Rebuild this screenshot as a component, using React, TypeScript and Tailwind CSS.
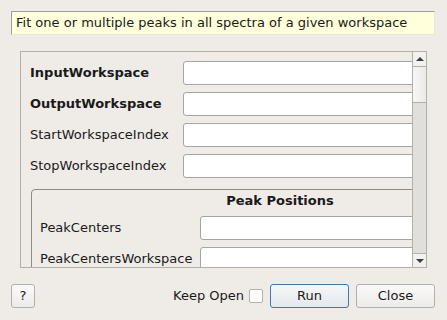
import React from "react";

const font = { fontFamily: '"DejaVu Sans", Verdana, sans-serif' };

function Field({ bold = false, label, inputLeft }: { bold?: boolean; label: string; inputLeft: string }) {
  return (
    <div className="flex items-center h-[24px]">
      <div className={`${inputLeft} shrink-0 text-[13px] text-[#1a1a1a] ${bold ? "font-bold" : ""}`}>{label}</div>
      <div className="flex-1 h-[24px] bg-white border border-[#a8a5a1] rounded-[3px]" />
    </div>
  );
}

export default function App() {
  return (
    <div className="w-[447px] h-[320px] bg-[#efebe7] overflow-hidden" style={font}>
      {/* description */}
      <div className="pt-[11px] pl-[11px]">
        <div className="w-[424px] h-[24px] bg-[#ffffdc] border-t border-l border-[#a09e9a] border-r border-b border-r-[#e8e6e0] border-b-[#e8e6e0] flex items-center pl-[4px] text-[13px] text-[#1a1a1a]">
          Fit one or multiple peaks in all spectra of a given workspace
        </div>
      </div>

      {/* scroll area */}
      <div className="ml-[20px] mt-[16px] w-[407px] h-[217px] border border-[#b3b0ab] flex">
        <div className="flex-1 overflow-hidden">
          <div className="w-[520px] pt-[9px] pl-[9px]">
            <div className="flex flex-col gap-[7px]">
              <Field bold label="InputWorkspace" inputLeft="w-[153px]" />
              <Field bold label="OutputWorkspace" inputLeft="w-[153px]" />
              <Field label="StartWorkspaceIndex" inputLeft="w-[153px]" />
              <Field label="StopWorkspaceIndex" inputLeft="w-[153px]" />
            </div>
            <div className="mt-[11px] ml-[1px] w-[490px] border border-[#8e8b87] rounded-[4px] pl-[8px] pb-[8px]">
              <div className="h-[26px] pt-[3px] leading-[16px] text-center text-[13px] font-bold text-[#1a1a1a]">Peak Positions</div>
              <div className="flex flex-col gap-[7px]">
                <Field label="PeakCenters" inputLeft="w-[160px]" />
                <Field label="PeakCentersWorkspace" inputLeft="w-[160px]" />
              </div>
            </div>
          </div>
        </div>
        {/* scrollbar */}
        <div className="w-[14px] shrink-0 border-l border-[#b3b0ab] flex flex-col bg-[#e1dfdb]">
          <div className="h-[15px] flex items-center justify-center bg-[#f3f1ee] border-b border-[#b3b0ab]">
            <div className="w-0 h-0 border-l-[4px] border-r-[4px] border-b-[4px] border-l-transparent border-r-transparent border-b-[#3c3c3c]" />
          </div>
          <div className="h-[36px] bg-gradient-to-r from-[#f7f6f4] to-[#ecebe8] border-b border-[#b3b0ab]" />
          <div className="flex-1" />
          <div className="h-[14px] flex items-center justify-center bg-[#f3f1ee] border-t border-[#b3b0ab]">
            <div className="w-0 h-0 border-l-[4px] border-r-[4px] border-t-[4px] border-l-transparent border-r-transparent border-t-[#3c3c3c]" />
          </div>
        </div>
      </div>

      {/* buttons */}
      <div className="mt-[16px] flex items-center h-[24px] pl-[11px] pr-[12px]">
        <div className="w-[24px] h-[24px] rounded-[3px] border border-[#b3b0ab] bg-gradient-to-b from-[#fbfaf9] to-[#ecebe8] flex items-center justify-center text-[13px] text-[#1a1a1a]">?</div>
        <div className="flex-1" />
        <div className="text-[13px] text-[#1a1a1a]">Keep Open</div>
        <div className="ml-[5px] w-[14px] h-[14px] bg-white border border-[#b3b0ab] rounded-[2px]" />
        <div className="ml-[7px] w-[79px] h-[24px] rounded-[3px] border border-[#3d7ab0] bg-gradient-to-b from-[#f5f7f8] to-[#e4e9ec] flex items-center justify-center text-[13px] text-[#1a1a1a]">Run</div>
        <div className="ml-[7px] w-[79px] h-[24px] rounded-[3px] border border-[#b3b0ab] bg-gradient-to-b from-[#fbfaf9] to-[#ecebe8] flex items-center justify-center text-[13px] text-[#1a1a1a]">Close</div>
      </div>
    </div>
  );
}
